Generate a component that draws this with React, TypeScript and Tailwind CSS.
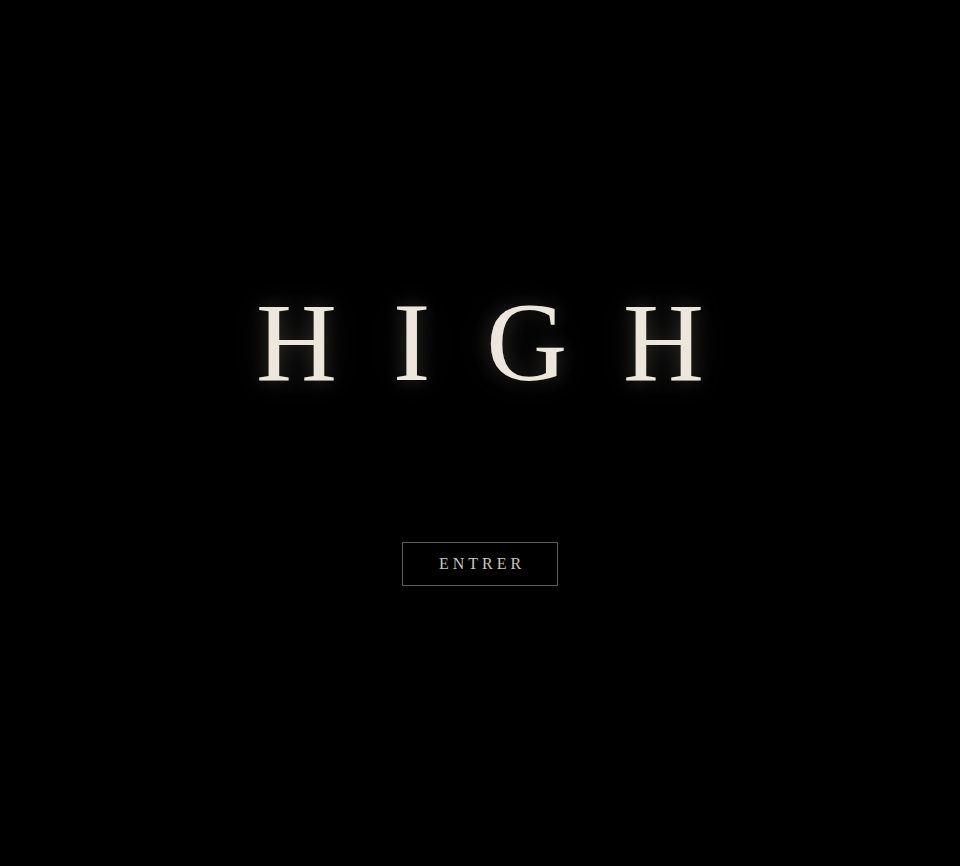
export default function App() {
  return (
    <div className="min-h-screen w-full bg-black flex flex-col items-center font-['Liberation_Serif','Times_New_Roman',serif]">
      <h1 className="mt-[286px] text-[112px] leading-none text-[#ede6dd] tracking-[0.5em] pl-[0.5em] [text-shadow:0_0_20px_rgba(237,230,221,0.22),0_0_44px_rgba(237,230,221,0.1)]">
        HIGH
      </h1>
      <button className="mt-[144px] w-[156px] h-[44px] border border-[#5a5a5a] text-[#cbc6c0] text-[16px] tracking-[0.25em] pl-[0.25em] bg-transparent">
        ENTRER
      </button>
    </div>
  );
}
